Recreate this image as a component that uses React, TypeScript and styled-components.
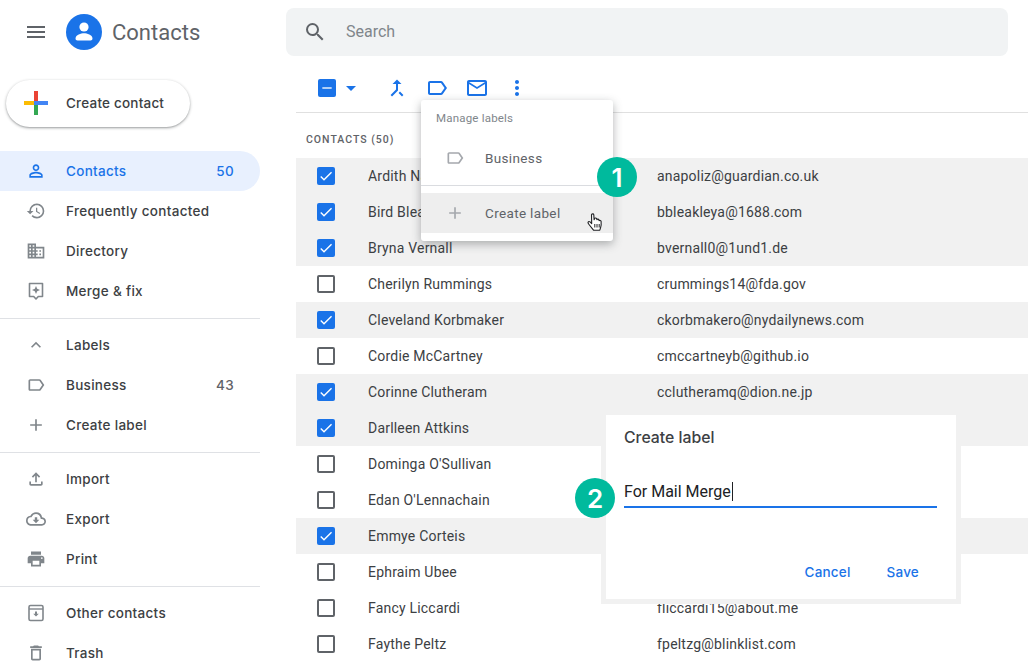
import React from 'react'
import styled, { createGlobalStyle } from 'styled-components'
import {
  MdAdd,
  MdArrowDropDown,
  MdCallMerge,
  MdCheck,
  MdDomain,
  MdExpandLess,
  MdHistory,
  MdMenu,
  MdMoreVert,
  MdOutlineCloudDownload,
  MdOutlineDelete,
  MdOutlineFileUpload,
  MdOutlineLabel,
  MdOutlineMailOutline,
  MdPersonOutline,
  MdPrint,
  MdRemove,
  MdSearch,
} from 'react-icons/md'

const GlobalStyle = createGlobalStyle`
  html, body {
    margin: 0;
    padding: 0;
    background: #fff;
    font-family: 'Roboto', 'Liberation Sans', sans-serif;
    overflow: hidden;
  }
  * {
    box-sizing: border-box;
  }
`

const Page = styled.div`
  position: relative;
  display: flex;
  width: 1028px;
  height: 668px;
  overflow: hidden;
`
const Sidebar = styled.aside`
  width: 260px;
  flex-shrink: 0;
`
const Brand = styled.div`
  display: flex;
  align-items: center;
  height: 64px;
  padding-left: 24px;
`
const Burger = styled.div`
  display: flex;
  width: 24px;
  margin-right: 18px;
  color: #5f6368;
  font-size: 24px;
`
const BrandName = styled.span`
  margin-left: 10px;
  font-size: 22px;
  color: #5f6368;
`
const CreateButton = styled.div`
  display: flex;
  align-items: center;
  width: 184px;
  height: 47px;
  margin: 16px 0 24px 6px;
  padding: 0 0 1px 18px;
  border-radius: 24px;
  background: #fff;
  box-shadow: 0 1px 3px rgba(60, 64, 67, 0.45), 0 1px 1px rgba(60, 64, 67, 0.12);
  font-family: 'Inter', 'Roboto', sans-serif;
  font-size: 13.5px;
  font-weight: 500;
  letter-spacing: 0.2px;
  color: #3c4043;
`
const CreateText = styled.span`
  margin-left: 18px;
`
const NavItem = styled.div<{ $active?: boolean }>`
  display: flex;
  align-items: center;
  height: 40px;
  padding: 0 26px 0 24px;
  border-radius: 0 20px 20px 0;
  background: ${(p) => (p.$active ? '#e8f0fe' : 'transparent')};
  color: ${(p) => (p.$active ? '#1a73e8' : '#3c4043')};
  font-family: 'Inter', 'Roboto', sans-serif;
  font-size: 13.5px;
  font-weight: 500;
  letter-spacing: 0.3px;
`
const NavIcon = styled.span<{ $active?: boolean }>`
  display: flex;
  justify-content: center;
  width: 24px;
  margin-right: 18px;
  font-size: 20px;
  color: ${(p) => (p.$active ? '#1a73e8' : '#80868b')};
`
const NavLabel = styled.span`
  flex: 1;
`
const NavCount = styled.span<{ $active?: boolean }>`
  color: ${(p) => (p.$active ? '#1a73e8' : '#5f6368')};
`
const Divider = styled.div`
  height: 1px;
  margin: 7px 0 6px;
  background: #dfe1e5;
`
const Main = styled.main`
  flex: 1;
  min-width: 0;
  padding: 8px 0 0 26px;
`
const SearchBar = styled.div`
  display: flex;
  align-items: center;
  width: 722px;
  height: 48px;
  padding: 0 0 1px 17px;
  border-radius: 8px;
  background: #f1f3f4;
  color: #80868b;
  font-size: 16px;
`
const SearchIcon = styled.span`
  display: flex;
  margin-right: 19px;
  font-size: 24px;
  color: #5f6368;
`
const Toolbar = styled.div`
  display: flex;
  align-items: center;
  height: 49px;
  margin: 8px 0 0 10px;
  padding: 0 0 1px 22px;
  border-bottom: 1px solid #e0e0e0;
  color: #1a73e8;
`
const ToolIcon = styled.span<{ $gap: number }>`
  display: flex;
  width: 24px;
  justify-content: center;
  margin-left: ${(p) => p.$gap}px;
  font-size: 24px;
`
const Box = styled.span<{ $checked: boolean }>`
  display: flex;
  align-items: center;
  justify-content: center;
  width: 18px;
  height: 18px;
  border-radius: 2px;
  background: ${(p) => (p.$checked ? '#1a73e8' : '#fff')};
  border: ${(p) => (p.$checked ? 'none' : '2px solid #5f6368')};
  color: #fff;
  font-size: 16px;
`
const SectionTitle = styled.div`
  display: flex;
  align-items: center;
  height: 45px;
  margin-left: 20px;
  padding-top: 7px;
  font-size: 10.5px;
  font-weight: 500;
  letter-spacing: 1px;
  color: #5f6368;
`
const Row = styled.div<{ $selected: boolean }>`
  display: flex;
  align-items: center;
  height: 36px;
  margin-left: 10px;
  padding-left: 21px;
  background: ${(p) => (p.$selected ? '#f1f1f1' : '#fff')};
  font-size: 14px;
  letter-spacing: 0.2px;
  color: #3c4043;
`
const RowName = styled.span`
  width: 289px;
  margin-left: 33px;
`
const Menu = styled.div`
  position: absolute;
  left: 421px;
  top: 100px;
  width: 192px;
  height: 141px;
  padding-top: 8px;
  border-radius: 3px;
  background: #fff;
  box-shadow: 0 3px 10px rgba(60, 64, 67, 0.4);
`
const MenuTitle = styled.div`
  height: 30px;
  padding: 0 15px;
  font-size: 11.5px;
  letter-spacing: 0.2px;
  line-height: 20px;
  color: #80868b;
`
const MenuItem = styled.div<{ $hover?: boolean }>`
  display: flex;
  align-items: center;
  height: 40px;
  padding-left: 24px;
  background: ${(p) => (p.$hover ? '#eeeeee' : '#fff')};
  font-size: 13.5px;
  letter-spacing: 0.35px;
  color: #5f6368;
`
const MenuIcon = styled.span`
  display: flex;
  width: 20px;
  margin-right: 20px;
  font-size: 20px;
  color: #a5a8ad;
`
const MenuDivider = styled.div`
  height: 1px;
  margin: 7px 0;
  background: #dadce0;
`
const Badge = styled.div<{ $x: number; $y: number }>`
  position: absolute;
  left: ${(p) => p.$x}px;
  top: ${(p) => p.$y}px;
  display: flex;
  align-items: center;
  justify-content: center;
  width: 40px;
  height: 40px;
  border-radius: 50%;
  background: #00ba9d;
  color: #fff;
  font-family: 'Inter', 'Liberation Sans', sans-serif;
  font-size: 26px;
  font-weight: 600;
`
const Pointer = styled.svg`
  position: absolute;
  left: 587px;
  top: 213px;
`
const Dialog = styled.div`
  position: absolute;
  left: 606px;
  top: 415px;
  display: flex;
  flex-direction: column;
  width: 350px;
  height: 184px;
  padding: 13px 19px 19px 18px;
  background: #fff;
  box-shadow: 0 0 0 5px #f1f1f1;
`
const DialogTitle = styled.div`
  font-family: 'Inter', 'Roboto', sans-serif;
  font-size: 15.8px;
  font-weight: 500;
  line-height: 20px;
  color: #3c4043;
`
const Field = styled.div`
  display: flex;
  align-items: center;
  height: 30px;
  margin-top: 30px;
  padding-bottom: 1px;
  border-bottom: 2px solid #1a73e8;
  font-size: 16px;
  color: #202124;
`
const Caret = styled.span`
  width: 1px;
  height: 19px;
  margin-left: 1px;
  background: #202124;
`
const DialogActions = styled.div`
  display: flex;
  justify-content: flex-end;
  gap: 36px;
  margin-top: auto;
  padding-right: 18px;
  color: #1a73e8;
  font-family: 'Inter', 'Roboto', sans-serif;
  font-size: 13.5px;
  font-weight: 500;
  letter-spacing: 0.2px;
`

const AvatarLogo = () => (
  <svg width="36" height="36" viewBox="0 0 36 36">
    <circle cx="18" cy="18" r="18" fill="#1a73e8" />
    <circle cx="18" cy="13" r="4.6" fill="#fff" />
    <path d="M9.500 24.500c0-3.600 5.600-5.200 8.500-5.200s8.500 1.600 8.500 5.200c0 1.200-.8 2-2 2h-13c-1.200 0-2-.8-2-2z" fill="#fff" />
  </svg>
)

const GooglePlus = () => (
  <svg width="24" height="24" viewBox="0 0 24 24">
    <rect x="10" y="0" width="4" height="12" fill="#ea4335" />
    <rect x="14" y="10" width="10" height="4" fill="#4285f4" />
    <rect x="10" y="14" width="4" height="10" fill="#34a853" />
    <rect x="0" y="10" width="10" height="4" fill="#fbbc04" />
    <rect x="10" y="10" width="4" height="4" fill="#4285f4" />
  </svg>
)

const MergeFixIcon = () => (
  <svg width="20" height="20" viewBox="0 0 20 20" fill="none">
    <path d="M3.500 2.500h13v13h-4.200L10 18l-2.300-2.500H3.500z" stroke="currentColor" strokeWidth="1.600" strokeLinejoin="round" />
    <path d="M10 5l1.200 2.800L14 9l-2.800 1.200L10 13l-1.200-2.800L6 9l2.800-1.200z" fill="currentColor" />
  </svg>
)

const OtherContactsIcon = () => (
  <svg width="20" height="20" viewBox="0 0 20 20" fill="none">
    <rect x="3" y="2.500" width="14" height="15" rx="1.500" stroke="currentColor" strokeWidth="1.600" />
    <path d="M3 6h14" stroke="currentColor" strokeWidth="1.400" />
    <path d="M9 8.500h2v2.200h1.800L10 13.600l-2.800-2.900H9z" fill="currentColor" />
  </svg>
)

const HandCursor = () => (
  <Pointer width="17" height="20" viewBox="0 0 17 20">
    <path
      d="M4.500 1.800c0-1.300 2.200-1.300 2.300 0l.3 5 .5-1.200c.4-.9 2-.7 2.100.3l.2.700c.5-.8 1.900-.5 2 .4l.2.700c.6-.6 1.900-.3 2 .7.200 2 .1 4.500-.5 6.300l-.8 2.500H6.500L2 11.500C1 10.300.6 9.300 1.500 8.700c.9-.6 1.900.3 3.200 1.900z"
      fill="#fff"
      stroke="#202124"
      strokeWidth="1.100"
      strokeLinejoin="round"
    />
    <path d="M7.800 11v3.500M10 11v3.500M12.200 11v3.500" stroke="#202124" strokeWidth="1" />
  </Pointer>
)

interface Contact {
  name: string
  email: string
  selected: boolean
}

const contacts: Contact[] = [
  { name: 'Ardith Napoliz', email: 'anapoliz@guardian.co.uk', selected: true },
  { name: 'Bird Bleakley', email: 'bbleakleya@1688.com', selected: true },
  { name: 'Bryna Vernall', email: 'bvernall0@1und1.de', selected: true },
  { name: 'Cherilyn Rummings', email: 'crummings14@fda.gov', selected: false },
  { name: 'Cleveland Korbmaker', email: 'ckorbmakero@nydailynews.com', selected: true },
  { name: 'Cordie McCartney', email: 'cmccartneyb@github.io', selected: false },
  { name: 'Corinne Clutheram', email: 'cclutheramq@dion.ne.jp', selected: true },
  { name: 'Darlleen Attkins', email: '', selected: true },
  { name: "Dominga O'Sullivan", email: '', selected: false },
  { name: "Edan O'Lennachain", email: '', selected: false },
  { name: 'Emmye Corteis', email: '', selected: true },
  { name: 'Ephraim Ubee', email: '', selected: false },
  { name: 'Fancy Liccardi', email: 'fliccardi15@about.me', selected: false },
  { name: 'Faythe Peltz', email: 'fpeltzg@blinklist.com', selected: false },
]

const App: React.FC = () => {
  return (
    <Page>
      <GlobalStyle />
      <Sidebar>
        <Brand>
          <Burger>
            <MdMenu />
          </Burger>
          <AvatarLogo />
          <BrandName>Contacts</BrandName>
        </Brand>
        <CreateButton>
          <GooglePlus />
          <CreateText>Create contact</CreateText>
        </CreateButton>
        <NavItem $active>
          <NavIcon $active>
            <MdPersonOutline />
          </NavIcon>
          <NavLabel>Contacts</NavLabel>
          <NavCount $active>50</NavCount>
        </NavItem>
        <NavItem>
          <NavIcon>
            <MdHistory />
          </NavIcon>
          <NavLabel>Frequently contacted</NavLabel>
        </NavItem>
        <NavItem>
          <NavIcon>
            <MdDomain />
          </NavIcon>
          <NavLabel>Directory</NavLabel>
        </NavItem>
        <NavItem>
          <NavIcon>
            <MergeFixIcon />
          </NavIcon>
          <NavLabel>Merge &amp; fix</NavLabel>
        </NavItem>
        <Divider />
        <NavItem>
          <NavIcon>
            <MdExpandLess />
          </NavIcon>
          <NavLabel>Labels</NavLabel>
        </NavItem>
        <NavItem>
          <NavIcon>
            <MdOutlineLabel />
          </NavIcon>
          <NavLabel>Business</NavLabel>
          <NavCount>43</NavCount>
        </NavItem>
        <NavItem>
          <NavIcon>
            <MdAdd />
          </NavIcon>
          <NavLabel>Create label</NavLabel>
        </NavItem>
        <Divider />
        <NavItem>
          <NavIcon>
            <MdOutlineFileUpload />
          </NavIcon>
          <NavLabel>Import</NavLabel>
        </NavItem>
        <NavItem>
          <NavIcon>
            <MdOutlineCloudDownload />
          </NavIcon>
          <NavLabel>Export</NavLabel>
        </NavItem>
        <NavItem>
          <NavIcon>
            <MdPrint />
          </NavIcon>
          <NavLabel>Print</NavLabel>
        </NavItem>
        <Divider />
        <NavItem>
          <NavIcon>
            <OtherContactsIcon />
          </NavIcon>
          <NavLabel>Other contacts</NavLabel>
        </NavItem>
        <NavItem>
          <NavIcon>
            <MdOutlineDelete />
          </NavIcon>
          <NavLabel>Trash</NavLabel>
        </NavItem>
      </Sidebar>
      <Main>
        <SearchBar>
          <SearchIcon>
            <MdSearch />
          </SearchIcon>
          Search
        </SearchBar>
        <Toolbar>
          <Box $checked>
            <MdRemove />
          </Box>
          <ToolIcon $gap={3}>
            <MdArrowDropDown />
          </ToolIcon>
          <ToolIcon $gap={22}>
            <MdCallMerge />
          </ToolIcon>
          <ToolIcon $gap={16}>
            <MdOutlineLabel />
          </ToolIcon>
          <ToolIcon $gap={16}>
            <MdOutlineMailOutline />
          </ToolIcon>
          <ToolIcon $gap={16}>
            <MdMoreVert />
          </ToolIcon>
        </Toolbar>
        <SectionTitle>CONTACTS (50)</SectionTitle>
        {contacts.map((c) => (
          <Row key={c.name} $selected={c.selected}>
            <Box $checked={c.selected}>{c.selected && <MdCheck />}</Box>
            <RowName>{c.name}</RowName>
            <span>{c.email}</span>
          </Row>
        ))}
      </Main>
      <Menu>
        <MenuTitle>Manage labels</MenuTitle>
        <MenuItem>
          <MenuIcon>
            <MdOutlineLabel />
          </MenuIcon>
          Business
        </MenuItem>
        <MenuDivider />
        <MenuItem $hover>
          <MenuIcon>
            <MdAdd />
          </MenuIcon>
          Create label
        </MenuItem>
      </Menu>
      <HandCursor />
      <Badge $x={597} $y={157}>1</Badge>
      <Dialog>
        <DialogTitle>Create label</DialogTitle>
        <Field>
          For Mail Merge
          <Caret />
        </Field>
        <DialogActions>
          <span>Cancel</span>
          <span>Save</span>
        </DialogActions>
      </Dialog>
      <Badge $x={575} $y={478}>2</Badge>
    </Page>
  )
}

export default App
